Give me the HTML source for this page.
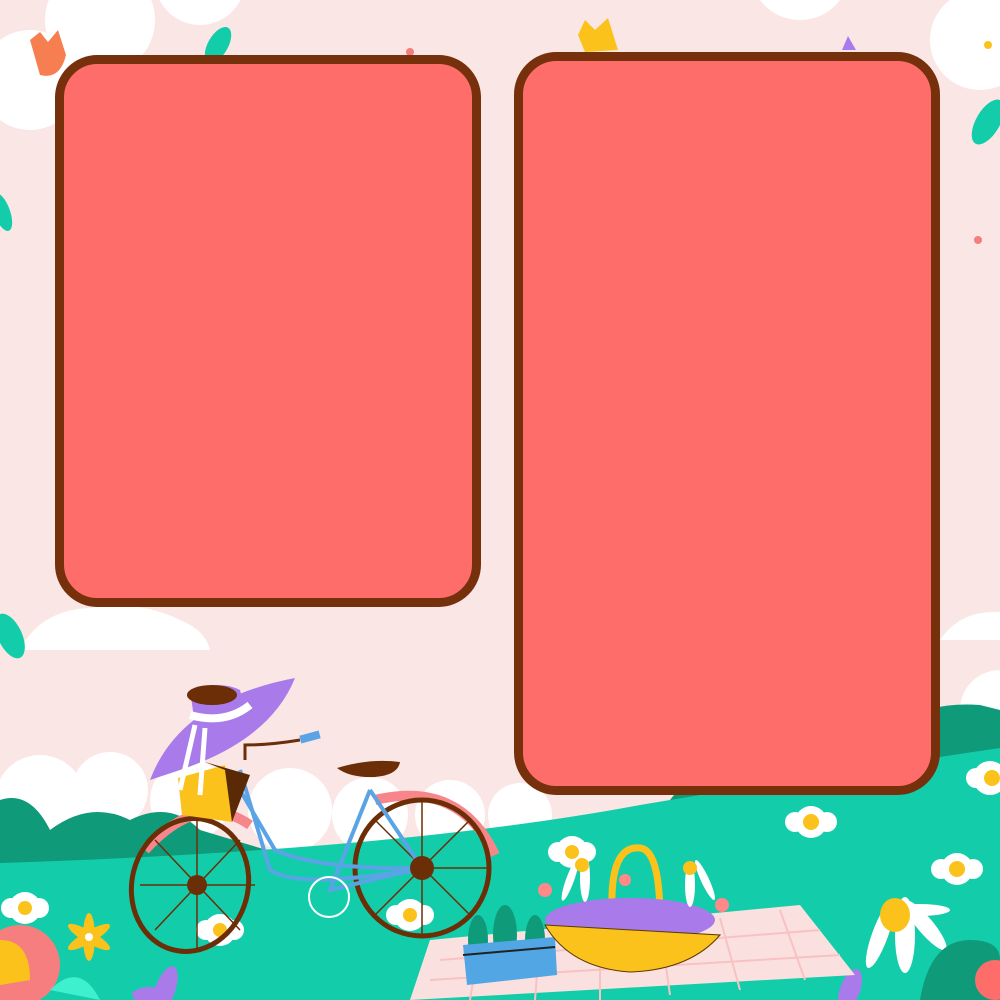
<!DOCTYPE html>
<html><head><meta charset="utf-8"><style>
html,body{margin:0;padding:0;width:1000px;height:1000px;overflow:hidden;background:#fbe6e6}
svg{display:block}
</style></head><body>
<svg width="1000" height="1000" viewBox="0 0 1000 1000" xmlns="http://www.w3.org/2000/svg">
<rect width="1000" height="1000" fill="#fbe6e6"/>
<g fill="#fff">
<circle cx="30" cy="80" r="50"/><circle cx="100" cy="20" r="55"/>
<circle cx="200" cy="-20" r="45"/>
<circle cx="980" cy="40" r="50"/><circle cx="800" cy="-30" r="50"/>
<path d="M20 650 Q40 610 90 608 Q140 600 180 620 Q205 630 210 650Z"/>
<path d="M940 640 Q960 610 1000 612 L1000 640Z"/>
</g>
<g fill="#fff">
<circle cx="40" cy="800" r="45"/><circle cx="110" cy="790" r="38"/><circle cx="190" cy="800" r="40"/><circle cx="290" cy="810" r="42"/><circle cx="370" cy="815" r="38"/><circle cx="450" cy="815" r="35"/><circle cx="520" cy="815" r="32"/>
<circle cx="1000" cy="710" r="40"/>
</g>
<path d="M0 800 Q30 790 50 830 Q90 800 130 820 Q170 800 200 830 L300 860 L0 870Z" fill="#0f9a7a"/>
<path d="M670 800 Q700 760 760 770 Q820 760 860 740 Q920 700 980 705 L1000 710 L1000 800Z" fill="#0f9a7a"/>
<path d="M0 863 Q400 850 640 805 Q850 770 1000 748 L1000 1000 L0 1000Z" fill="#13cdaa"/>
<g fill="#13cdaa">
<ellipse cx="218" cy="45" rx="10" ry="20" transform="rotate(30 218 45)"/>
<ellipse cx="988" cy="122" rx="12" ry="25" transform="rotate(30 988 122)"/>
<ellipse cx="2" cy="212" rx="8" ry="20" transform="rotate(-20 2 212)"/>
<ellipse cx="10" cy="636" rx="12" ry="24" transform="rotate(-25 10 636)"/>
</g>
<path d="M30 40 L40 32 L48 42 L58 30 L66 55 Q60 80 40 75 Z" fill="#f77e50"/>
<path d="M578 35 L585 20 L595 30 L608 18 L618 50 L585 52Z" fill="#fbc21c"/>
<path d="M842 50 L848 36 L856 50Z" fill="#a97aea"/>
<circle cx="410" cy="52" r="4" fill="#f47d7d"/><circle cx="978" cy="240" r="4" fill="#f47d7d"/><circle cx="988" cy="45" r="4" fill="#fbc21c"/>
<rect x="59.5" y="59.5" width="417" height="543" rx="38" fill="#ff6d6b" stroke="#76300c" stroke-width="9"/>
<rect x="518.5" y="56.5" width="417" height="734" rx="38" fill="#ff6d6b" stroke="#76300c" stroke-width="9"/>
<g fill="#fff">
<g transform="translate(811 822)"><circle r="16"/><circle cx="-16" r="10"/><circle cx="16" r="10"/></g>
<g transform="translate(957 869)"><circle r="16"/><circle cx="-16" r="10"/><circle cx="16" r="10"/></g>
<g transform="translate(990 778)"><circle r="17"/><circle cx="-14" r="10"/></g>
<g transform="translate(572 852)"><circle r="16"/><circle cx="-14" r="10"/><circle cx="14" r="10"/></g>
<g transform="translate(25 908)"><circle r="16"/><circle cx="-14" r="10"/><circle cx="14" r="10"/></g>
<g transform="translate(220 930)"><circle r="16"/><circle cx="-14" r="10"/><circle cx="14" r="10"/></g>
<g transform="translate(410 915)"><circle r="16"/><circle cx="-14" r="10"/><circle cx="14" r="10"/></g>
</g>
<g fill="#fbc21c">
<circle cx="811" cy="822" r="8"/><circle cx="957" cy="869" r="8"/><circle cx="992" cy="778" r="8"/><circle cx="572" cy="852" r="7"/><circle cx="25" cy="908" r="7"/><circle cx="220" cy="930" r="7"/><circle cx="410" cy="915" r="7"/>
</g>
<g fill="#fff"><ellipse cx="905" cy="935" rx="10" ry="38"/><ellipse cx="880" cy="935" rx="8" ry="35" transform="rotate(20 880 935)"/><ellipse cx="925" cy="925" rx="8" ry="32" transform="rotate(-40 925 925)"/><ellipse cx="920" cy="910" rx="30" ry="6"/></g>
<ellipse cx="895" cy="915" rx="15" ry="17" fill="#fbc21c"/>
<path d="M920 1000 Q930 940 970 940 Q1000 940 1000 960 L1000 1000Z" fill="#0f9a7a"/>
<circle cx="995" cy="980" r="20" fill="#ff6d6b"/>
<circle cx="20" cy="965" r="40" fill="#f77e7e"/><path d="M0 940 Q30 940 30 980 L0 985Z" fill="#fbc21c"/>
<path d="M50 990 Q80 960 100 1000Z" fill="#3ff0cf"/>
<g fill="#fbc21c" transform="translate(89 937)"><ellipse rx="6" ry="24"/><ellipse rx="6" ry="24" transform="rotate(60)"/><ellipse rx="6" ry="24" transform="rotate(-60)"/></g>
<circle cx="89" cy="937" r="4" fill="#fff"/>
<g fill="#a97aea"><ellipse cx="165" cy="990" rx="10" ry="25" transform="rotate(20 165 990)"/><ellipse cx="150" cy="995" rx="18" ry="8"/><ellipse cx="850" cy="990" rx="10" ry="22" transform="rotate(20 850 990)"/></g>
<path d="M430 940 L800 905 L855 975 L410 1000Z" fill="#fbe0e0"/>
<g stroke="#f7c2c2" stroke-width="2"><path d="M440 960 L820 930 M430 980 L840 955"/><path d="M480 940 L470 1000 M540 935 L535 1000 M600 930 L600 1000 M660 925 L670 995 M720 918 L740 990 M780 910 L805 980"/></g>
<g fill="#0f9a7a"><ellipse cx="478" cy="940" rx="10" ry="25"/><ellipse cx="505" cy="935" rx="12" ry="30"/><ellipse cx="535" cy="940" rx="10" ry="25"/></g>
<path d="M463 945 L555 937 L557 975 L467 985Z" fill="#51a6e3"/><path d="M463 955 L555 947" stroke="#222" stroke-width="2"/>
<path d="M612 910 Q610 845 640 848 Q660 850 660 920" fill="none" stroke="#fbc21c" stroke-width="7"/>
<ellipse cx="630" cy="920" rx="85" ry="22" fill="#a97aea"/>
<path d="M545 925 L720 935 Q690 970 630 972 Q570 968 545 925Z" fill="#fbc21c" stroke="#5b3a00" stroke-width="1"/>
<g fill="#fff"><ellipse cx="585" cy="878" rx="5" ry="24"/><ellipse cx="570" cy="880" rx="4" ry="22" transform="rotate(20 570 880)"/><ellipse cx="690" cy="885" rx="5" ry="22"/><ellipse cx="705" cy="880" rx="4" ry="22" transform="rotate(-25 705 880)"/></g>
<circle cx="582" cy="865" r="7" fill="#fbc21c"/><circle cx="690" cy="868" r="7" fill="#fbc21c"/>
<circle cx="545" cy="890" r="7" fill="#f88"/><circle cx="722" cy="905" r="7" fill="#f88"/><circle cx="625" cy="880" r="6" fill="#f88"/>
<g fill="none">
<path d="M145 850 Q200 790 250 825" stroke="#f7868a" stroke-width="10"/>
<path d="M375 800 Q460 780 495 855" stroke="#f7868a" stroke-width="10"/>
<ellipse cx="190" cy="885" rx="58" ry="67" stroke="#6b2e06" stroke-width="5" transform="rotate(15 190 885)"/>
<ellipse cx="422" cy="868" rx="67" ry="68" stroke="#6b2e06" stroke-width="5"/>
<g stroke="#6b2e06" stroke-width="1.5"><path d="M197 820 L197 950 M140 885 L255 885 M155 840 L240 930 M240 840 L155 930"/><path d="M422 800 L422 935 M355 868 L490 868 M375 820 L470 915 M470 820 L375 915"/></g>
<g stroke="#5aa4e6" stroke-width="4"><path d="M240 770 L270 870 Q300 890 422 868 M240 790 L275 850 Q320 870 422 868 M370 790 L330 890 L422 868 M370 790 L422 868"/></g>
<circle cx="329" cy="897" r="20" stroke="#fff" stroke-width="2"/>
<path d="M245 760 L245 745 Q270 745 300 740" stroke="#6b2e06" stroke-width="3"/>
</g>
<circle cx="197" cy="885" r="10" fill="#6b2e06"/><circle cx="422" cy="868" r="12" fill="#6b2e06"/>
<rect x="300" y="733" width="20" height="8" fill="#5aa4e6" transform="rotate(-15 310 737)"/>
<path d="M337 768 Q370 758 400 762 Q398 775 375 777 Q350 778 337 768Z" fill="#6b2e06"/>
<path d="M178 778 L225 765 L232 822 L182 815Z" fill="#fbc21c"/><path d="M205 762 L250 775 L232 822 L225 770Z" fill="#5a2a06"/>
<path d="M150 780 Q180 700 295 678 Q270 740 180 770Z" fill="#a97aea"/>
<path d="M190 690 Q220 680 240 690 L250 730 Q210 740 195 725Z" fill="#a97aea"/>
<ellipse cx="212" cy="695" rx="25" ry="10" fill="#6b2e06"/>
<path d="M190 715 Q225 725 250 705" stroke="#fff" stroke-width="8" fill="none"/>
<path d="M195 725 L180 790 M205 728 L200 795" stroke="#fff" stroke-width="5"/>
</svg>
</body></html>
